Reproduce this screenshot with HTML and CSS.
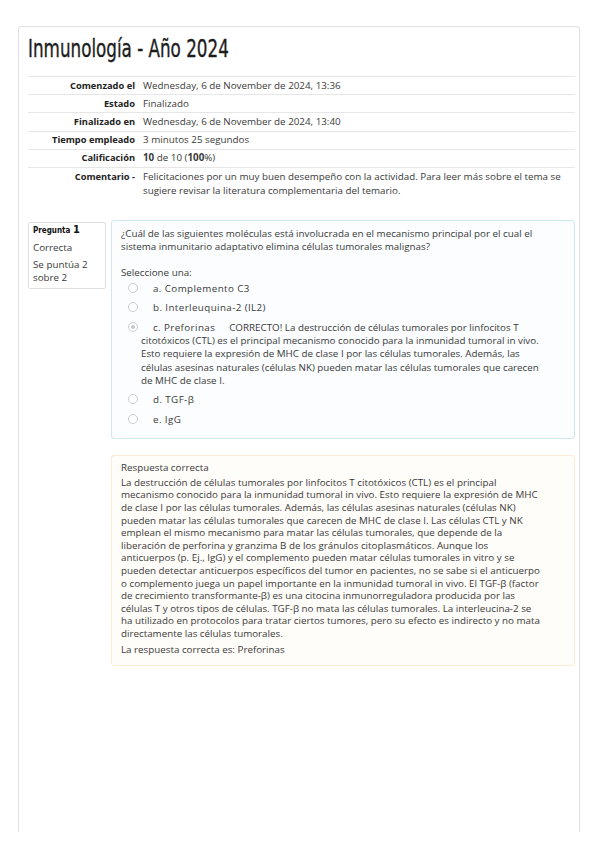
FILE: index.html
```html
<!DOCTYPE html>
<html lang="es">
<head>
<meta charset="utf-8">
<title>Inmunología - Año 2024</title>
<link rel="stylesheet" href="styles.css">
</head>
<body>
<div class="card">
  <h1 class="title"><span class="title-text">Inmunología - Año 2024</span></h1>
  <table class="summary">
    <tr><th>Comenzado el</th><td>Wednesday, 6 de November de 2024, 13:36</td></tr>
    <tr><th>Estado</th><td>Finalizado</td></tr>
    <tr><th>Finalizado en</th><td>Wednesday, 6 de November de 2024, 13:40</td></tr>
    <tr><th>Tiempo empleado</th><td>3 minutos 25 segundos</td></tr>
    <tr><th>Calificación</th><td><b>10</b> de 10 (<b>100</b>%)</td></tr>
    <tr><th>Comentario -</th><td>Felicitaciones por un muy buen desempeño con la actividad. Para leer más sobre el tema se sugiere revisar la literatura complementaria del temario.</td></tr>
  </table>

  <div class="question">
    <div class="info">
      <div class="qno">Pregunta <span class="num">1</span></div>
      <div class="state">Correcta</div>
      <div class="grade">Se puntúa 2 sobre 2</div>
    </div>
    <div class="qmain">
      <div class="qbox">
        <p class="qtext">¿Cuál de las siguientes moléculas está involucrada en el mecanismo principal por el cual el sistema inmunitario adaptativo elimina células tumorales malignas?</p>
        <p class="prompt">Seleccione una:</p>
        <div class="opt"><span class="radio"></span><span class="lbl">a. Complemento C3</span></div>
        <div class="opt"><span class="radio"></span><span class="lbl">b. Interleuquina-2 (IL2)</span></div>
        <div class="opt"><span class="radio checked"></span><span class="lbl">c. Preforinas</span><span class="fb">CORRECTO! La destrucción de células tumorales por linfocitos T<br>citotóxicos (CTL) es el principal mecanismo conocido para la inmunidad tumoral in vivo.<br>Esto requiere la expresión de MHC de clase I por las células tumorales. Además, las<br>células asesinas naturales (células NK) pueden matar las células tumorales que carecen<br>de MHC de clase I.</span></div>
        <div class="opt"><span class="radio"></span><span class="lbl">d. TGF-β</span></div>
        <div class="opt"><span class="radio"></span><span class="lbl">e. IgG</span></div>
      </div>
      <div class="feedback">
        <p class="fhead">Respuesta correcta</p>
        <p class="ftext">La destrucción de células tumorales por linfocitos T citotóxicos (CTL) es el principal<br>mecanismo conocido para la inmunidad tumoral in vivo. Esto requiere la expresión de MHC<br>de clase I por las células tumorales. Además, las células asesinas naturales (células NK)<br>pueden matar las células tumorales que carecen de MHC de clase I. Las células CTL y NK<br>emplean el mismo mecanismo para matar las células tumorales, que depende de la<br>liberación de perforina y granzima B de los gránulos citoplasmáticos. Aunque los<br>anticuerpos (p. Ej., IgG) y el complemento pueden matar células tumorales in vitro y se<br>pueden detectar anticuerpos específicos del tumor en pacientes, no se sabe si el anticuerpo<br>o complemento juega un papel importante en la inmunidad tumoral in vivo. El TGF-β (factor<br>de crecimiento transformante-β) es una citocina inmunorreguladora producida por las<br>células T y otros tipos de células. TGF-β no mata las células tumorales. La interleucina-2 se<br>ha utilizado en protocolos para tratar ciertos tumores, pero su efecto es indirecto y no mata<br>directamente las células tumorales.</p>
        <p class="fanswer">La respuesta correcta es: Preforinas</p>
      </div>
    </div>
  </div>
</div>
</body>
</html>
```
FILE: styles.css
```css
html, body {
  margin: 0;
  padding: 0;
  background: #ffffff;
}
body {
  font-family: "Open Sans", "DejaVu Sans", sans-serif;
  font-size: 9.8px;
  color: #3a3a3a;
}
.card {
  margin: 26px 0 0 18px;
  width: 547px;
  height: 798px;
  padding: 7px 4px 0 9px;
  border: 1px solid #e2e2e2;
  border-bottom: none;
  border-radius: 4px 4px 0 0;
}
.title {
  margin: 0;
  font-family: "DejaVu Sans Condensed", "Liberation Sans Narrow", sans-serif;
  font-weight: normal;
  font-size: 25px;
  line-height: 30px;
  color: #1d1d1d;
  height: 42px;
  border-bottom: 1px solid #e6e6e6;
  white-space: nowrap;
}
.title-text {
  display: inline-block;
  transform: scaleX(0.745);
  transform-origin: left center;
  -webkit-text-stroke: 0.35px #1d1d1d;
}
.summary {
  width: 100%;
  border-collapse: collapse;
}
.summary th,
.summary td {
  border-bottom: 1px solid #e6e6e6;
  padding: 1.6px 0;
  line-height: 14px;
  vertical-align: top;
  text-align: left;
}
.summary th {
  width: 107px;
  text-align: right;
  padding-right: 8px;
  font-size: 9.3px;
  font-weight: bold;
  color: #222;
  white-space: nowrap;
}
.summary tr:last-child th,
.summary tr:last-child td {
  border-bottom: none;
}
.question {
  display: flex;
  gap: 5px;
  margin-top: 21px;
}
.info {
  width: 68px;
  flex: none;
  align-self: flex-start;
  border: 1px solid #dedede;
  border-radius: 2px;
  padding: 0 4px 4px 4px;
  margin-top: 2px;
  line-height: 13px;
}
.qno {
  font-family: "DejaVu Sans Condensed", "Liberation Sans Narrow", sans-serif;
  font-weight: bold;
  font-size: 8px;
  color: #111;
  margin-bottom: 4px;
}
.qno .num {
  font-size: 11px;
}
.state {
  margin-bottom: 4px;
}
.qmain {
  flex: 1;
  min-width: 0;
}
.qbox {
  border: 1px solid #cfe7f1;
  border-radius: 3px;
  background: #fbfdfe;
  padding: 6px 12px 6px 9px;
}
.qtext {
  margin: 0 0 13px 0;
  line-height: 13px;
}
.prompt {
  margin: 0 0 3px 0;
  line-height: 13px;
}
.opt {
  padding-left: 20px;
  line-height: 13.3px;
  margin-bottom: 6px;
}
.radio {
  display: inline-block;
  width: 8px;
  height: 8px;
  border: 1px solid #cfcfcf;
  border-radius: 50%;
  background: #fff;
  margin-left: -13px;
  margin-right: 15px;
  vertical-align: -1px;
  position: relative;
}
.radio.checked::after {
  content: "";
  position: absolute;
  left: 2px;
  top: 2px;
  width: 4px;
  height: 4px;
  border-radius: 50%;
  background: #c8c8c8;
}
.lbl {
  letter-spacing: 0.4px;
}
.fb {
  margin-left: 14px;
}
.feedback {
  margin-top: 16px;
  border: 1px solid #fbecd6;
  border-radius: 3px;
  background: #fffdf9;
  padding: 5px 14px 9px 9px;
}
.fhead {
  margin: 0 0 3px 0;
  line-height: 13px;
}
.ftext {
  margin: 0 0 2px 0;
  line-height: 12.6px;
}
.fanswer {
  margin: 0;
  line-height: 13px;
}
```
